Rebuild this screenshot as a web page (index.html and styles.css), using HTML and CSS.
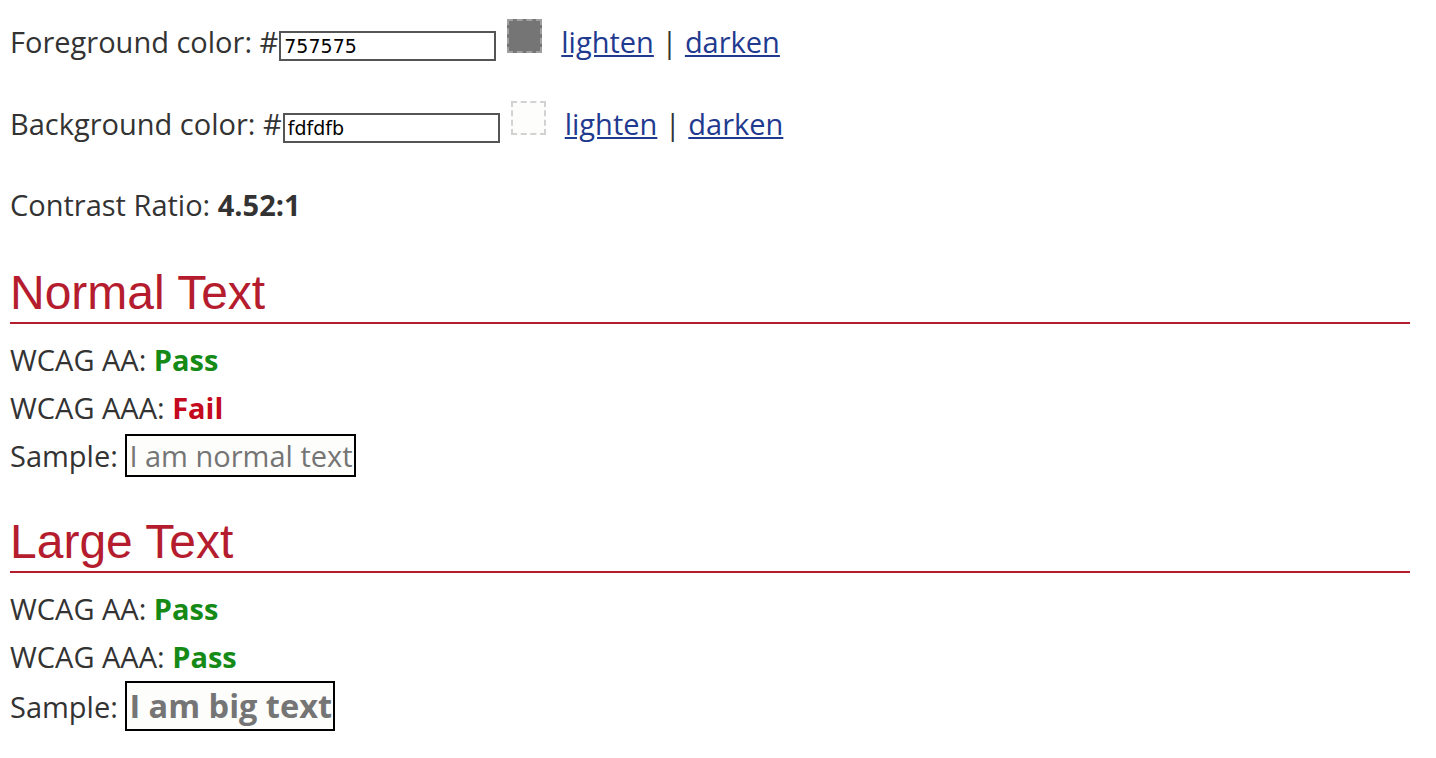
FILE: index.html
```html
<!DOCTYPE html>
<html>
<head>
<meta charset="utf-8">
<link rel="stylesheet" href="styles.css">
</head>
<body>
<div class="page">
  <div class="color-row">
    <label class="label">Foreground color: #</label><input class="hex" type="text" value="757575"><span class="swatch swatch-fg"></span><span class="links"><a href="#">lighten</a> | <a href="#">darken</a></span>
  </div>
  <div class="color-row">
    <label class="label">Background color: #</label><input class="hex" type="text" value="fdfdfb"><span class="swatch swatch-bg"></span><span class="links"><a href="#">lighten</a> | <a href="#">darken</a></span>
  </div>
  <div class="ratio">Contrast Ratio: <b>4.52:1</b></div>

  <h2 class="section-title">Normal Text</h2>
  <div class="result">WCAG AA: <b class="pass">Pass</b></div>
  <div class="result">WCAG AAA: <b class="fail">Fail</b></div>
  <div class="result">Sample: <span class="sample">I am normal text</span></div>

  <h2 class="section-title">Large Text</h2>
  <div class="result">WCAG AA: <b class="pass">Pass</b></div>
  <div class="result">WCAG AAA: <b class="pass">Pass</b></div>
  <div class="result">Sample: <span class="sample sample-big">I am big text</span></div>
</div>
</body>
</html>
```
FILE: styles.css
```css
html, body {
  margin: 0;
  padding: 0;
  background: #ffffff;
}
.page {
  padding: 18px 26px 10px 10px;
  font-family: "Open Sans", sans-serif;
  font-size: 29px;
  line-height: 48px;
  color: #333333;
}
.color-row {
  white-space: nowrap;
  margin-bottom: 34px;
}
.color-row + .ratio {
  margin-top: -1px;
}
.label {
  white-space: pre;
}
.hex {
  display: inline-block;
  width: 217px;
  height: 30px;
  box-sizing: border-box;
  border: 2px solid #555555;
  padding: 0 3px;
  margin: 0 0 0 1px;
  font-family: "DejaVu Sans", sans-serif;
  font-size: 19px;
  color: #000;
  background: #fff;
  vertical-align: baseline;
}
.swatch {
  display: inline-block;
  width: 35px;
  height: 34px;
  box-sizing: border-box;
  margin-left: 11px;
  border: 2px dashed #a0a0a0;
  vertical-align: baseline;
}
.swatch-fg {
  background: #757575;
}
.swatch-bg {
  background: #fdfdfb;
  border-color: #d2d2d2;
}
.links {
  margin-left: 19px;
}
.links a {
  color: #1f3a8f;
  text-decoration: underline;
}
.section-title {
  font-family: "Liberation Sans", Arial, sans-serif;
  font-weight: normal;
  font-size: 48px;
  line-height: 55px;
  color: #b51c2e;
  margin: 36px 0 12px 0;
  padding-bottom: 2px;
  border-bottom: 2px solid #b51c2e;
}
.result + .section-title {
  margin-top: 34px;
}
.pass {
  color: #168a17;
}
.fail {
  color: #c40a1d;
}
.sample {
  display: inline-block;
  border: 2px solid #000;
  background: #fdfdfb;
  color: #757575;
  padding: 0 1px 0 2px;
  line-height: 39px;
}
.sample-big {
  font-weight: bold;
  font-size: 32.5px;
  line-height: 46px;
}
```
